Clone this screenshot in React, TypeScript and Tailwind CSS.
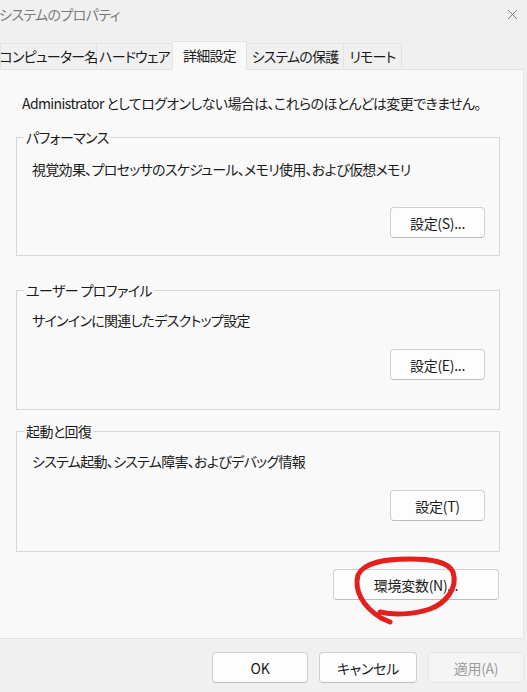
import { X } from "lucide-react";

const font = "font-['Noto_Sans_CJK_JP','Noto_Sans',sans-serif] [font-feature-settings:'palt']";

function Btn({ label, className = "", disabled = false }: { label: string; className?: string; disabled?: boolean }) {
  return (
    <button
      className={
        "h-[31px] rounded-[4px] border text-[14px] leading-[20px] tracking-[-0.3px] " +
        (disabled
          ? "border-[#e5e5e5] bg-[#f5f5f5] text-[#9d9d9d] "
          : "border-[#d0d0d0] border-b-[#bcbcbc] bg-[#fdfdfd] text-[#1b1b1b] ") +
        className
      }
    >
      {label}
    </button>
  );
}

function Group({ title, text, button, pt, mt, pb }: { title: string; text: string; button: string; pt: string; mt: string; pb: string }) {
  return (
    <fieldset className={"mx-[16px] w-[484px] border border-[#d6d6d6] " + pb}>
      <legend className="ml-[7px] px-[2px] text-[14px] leading-[20px] tracking-[-0.6px] text-[#1b1b1b]">{title}</legend>
      <p className={"pl-[15px] text-[14px] leading-[20px] tracking-[-0.7px] text-[#1b1b1b] " + pt}>{text}</p>
      <div className={"flex justify-end pr-[14px] " + mt}>
        <Btn label={button} className="w-[95px]" />
      </div>
    </fieldset>
  );
}

const tab = "flex h-[26px] items-center justify-center whitespace-nowrap border border-b-0 border-[#e3e3e3] bg-[#f0f0f0]";

export default function App() {
  return (
    <div className={"relative w-[527px] h-[692px] overflow-hidden bg-[#f0f0f0] " + font}>
      {/* title bar */}
      <div className="flex h-[29px] items-center justify-between">
        <span className="-ml-[1px] text-[14px] tracking-[-0.6px] text-[#7c7c7c]">システムのプロパティ</span>
        <X className="mr-[6px] h-[17px] w-[17px] text-[#6b6b6b]" strokeWidth={1.2} />
      </div>

      {/* tabs */}
      <div className="mt-[12px] flex h-[28px] items-end text-[14px] tracking-[-0.8px] text-[#1b1b1b]">
        <div className={tab + " w-[97px]"}>コンピューター名</div>
        <div className={tab + " w-[76px] border-l-0"}>ハードウェア</div>
        <div className="relative z-10 -mb-[1px] flex h-[29px] w-[74px] items-center justify-center whitespace-nowrap border border-b-0 border-l-0 border-[#e3e3e3] bg-[#f9f9f9] pb-[2px]">詳細設定</div>
        <div className={tab + " w-[97px] border-l-0"}>システムの保護</div>
        <div className={tab + " w-[58px] border-l-0"}>リモート</div>
      </div>

      {/* panel */}
      <div className="flex h-[570px] w-[524px] flex-col border-t border-r border-b border-[#e3e3e3] bg-[#f9f9f9]">
        <p className="ml-[22px] mt-[23px] text-[14px] leading-[20px] tracking-[-0.6px] text-[#1b1b1b]">
          Administrator としてログオンしない場合は、これらのほとんどは変更できません。
        </p>

        <div className="mt-[14px]">
          <Group
            title="パフォーマンス"
            text="視覚効果、プロセッサのスケジュール、メモリ使用、および仮想メモリ"
            button="設定(S)..."
            pt="pt-[12px]"
            mt="mt-[28px]"
            pb="pb-[17px]"
          />
        </div>
        <div className="mt-[24px]">
          <Group
            title="ユーザー プロファイル"
            text="サインインに関連したデスクトップ設定"
            button="設定(E)..."
            pt="pt-[10px]"
            mt="mt-[19px]"
            pb="pb-[29px]"
          />
        </div>
        <div className="mt-[11px]">
          <Group
            title="起動と回復"
            text="システム起動、システム障害、およびデバッグ情報"
            button="設定(T)"
            pt="pt-[10px]"
            mt="mt-[19px]"
            pb="pb-[30px]"
          />
        </div>

        <div className="mt-[17px] flex justify-end pr-[24px]">
          <Btn label="環境変数(N)..." className="w-[166px]" />
        </div>
      </div>

      {/* dialog buttons */}
      <div className="mt-[13px] flex justify-end gap-[11px] pr-[3px]">
        <Btn label="OK" className="w-[96px]" />
        <Btn label="キャンセル" className="w-[98px]" />
        <Btn label="適用(A)" className="w-[96px]" disabled />
      </div>

      {/* red hand-drawn annotation */}
      <svg className="pointer-events-none absolute left-0 top-0" width="527" height="692" viewBox="0 0 527 692">
        <path
          d="M390 622 L381 618 C362 606 354 590 358 575 C364 562 385 559 410 559 C430 559 448 561 453 572 C458 588 446 603 430 609 C412 615 393 615 380 612"
          fill="none"
          stroke="#e3201e"
          strokeWidth="5"
          strokeLinecap="round"
          strokeLinejoin="round"
        />
      </svg>
    </div>
  );
}
